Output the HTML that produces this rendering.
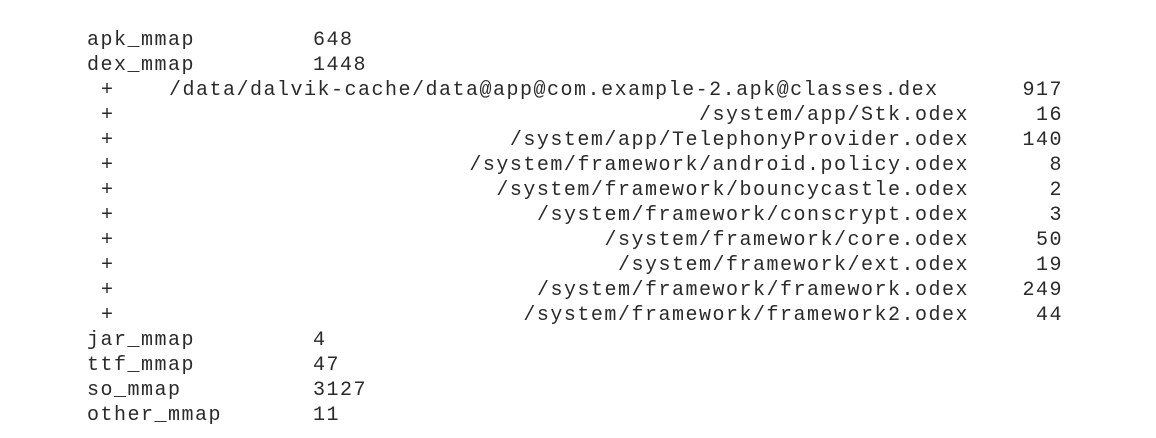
<!DOCTYPE html>
<html><head><meta charset="utf-8"><style>
html,body{margin:0;padding:0;background:#fff;width:1156px;height:438px;overflow:hidden}
.r{position:absolute;height:25px;left:0;width:1156px;font-family:"Liberation Mono",monospace;font-size:20px;letter-spacing:1.5px;line-height:25px;color:#2a2a2a;white-space:pre}
.r span{position:absolute;top:0}
.a{left:87px}.v{left:313px}.p{left:101px}
.path{right:187px}.n{right:93px}
</style></head><body>
<div class="r" style="top:28px"><span class="a">apk_mmap</span><span class="v">648</span></div>
<div class="r" style="top:53px"><span class="a">dex_mmap</span><span class="v">1448</span></div>
<div class="r" style="top:78px"><span class="p">+</span><span style="left:169px">/data/dalvik-cache/data@app@com.example-2.apk@classes.dex</span><span class="n">917</span></div>
<div class="r" style="top:103px"><span class="p">+</span><span class="path">/system/app/Stk.odex</span><span class="n">16</span></div>
<div class="r" style="top:128px"><span class="p">+</span><span class="path">/system/app/TelephonyProvider.odex</span><span class="n">140</span></div>
<div class="r" style="top:153px"><span class="p">+</span><span class="path">/system/framework/android.policy.odex</span><span class="n">8</span></div>
<div class="r" style="top:178px"><span class="p">+</span><span class="path">/system/framework/bouncycastle.odex</span><span class="n">2</span></div>
<div class="r" style="top:203px"><span class="p">+</span><span class="path">/system/framework/conscrypt.odex</span><span class="n">3</span></div>
<div class="r" style="top:228px"><span class="p">+</span><span class="path">/system/framework/core.odex</span><span class="n">50</span></div>
<div class="r" style="top:253px"><span class="p">+</span><span class="path">/system/framework/ext.odex</span><span class="n">19</span></div>
<div class="r" style="top:278px"><span class="p">+</span><span class="path">/system/framework/framework.odex</span><span class="n">249</span></div>
<div class="r" style="top:303px"><span class="p">+</span><span class="path">/system/framework/framework2.odex</span><span class="n">44</span></div>
<div class="r" style="top:328px"><span class="a">jar_mmap</span><span class="v">4</span></div>
<div class="r" style="top:353px"><span class="a">ttf_mmap</span><span class="v">47</span></div>
<div class="r" style="top:378px"><span class="a">so_mmap</span><span class="v">3127</span></div>
<div class="r" style="top:403px"><span class="a">other_mmap</span><span class="v">11</span></div>
</body></html>
